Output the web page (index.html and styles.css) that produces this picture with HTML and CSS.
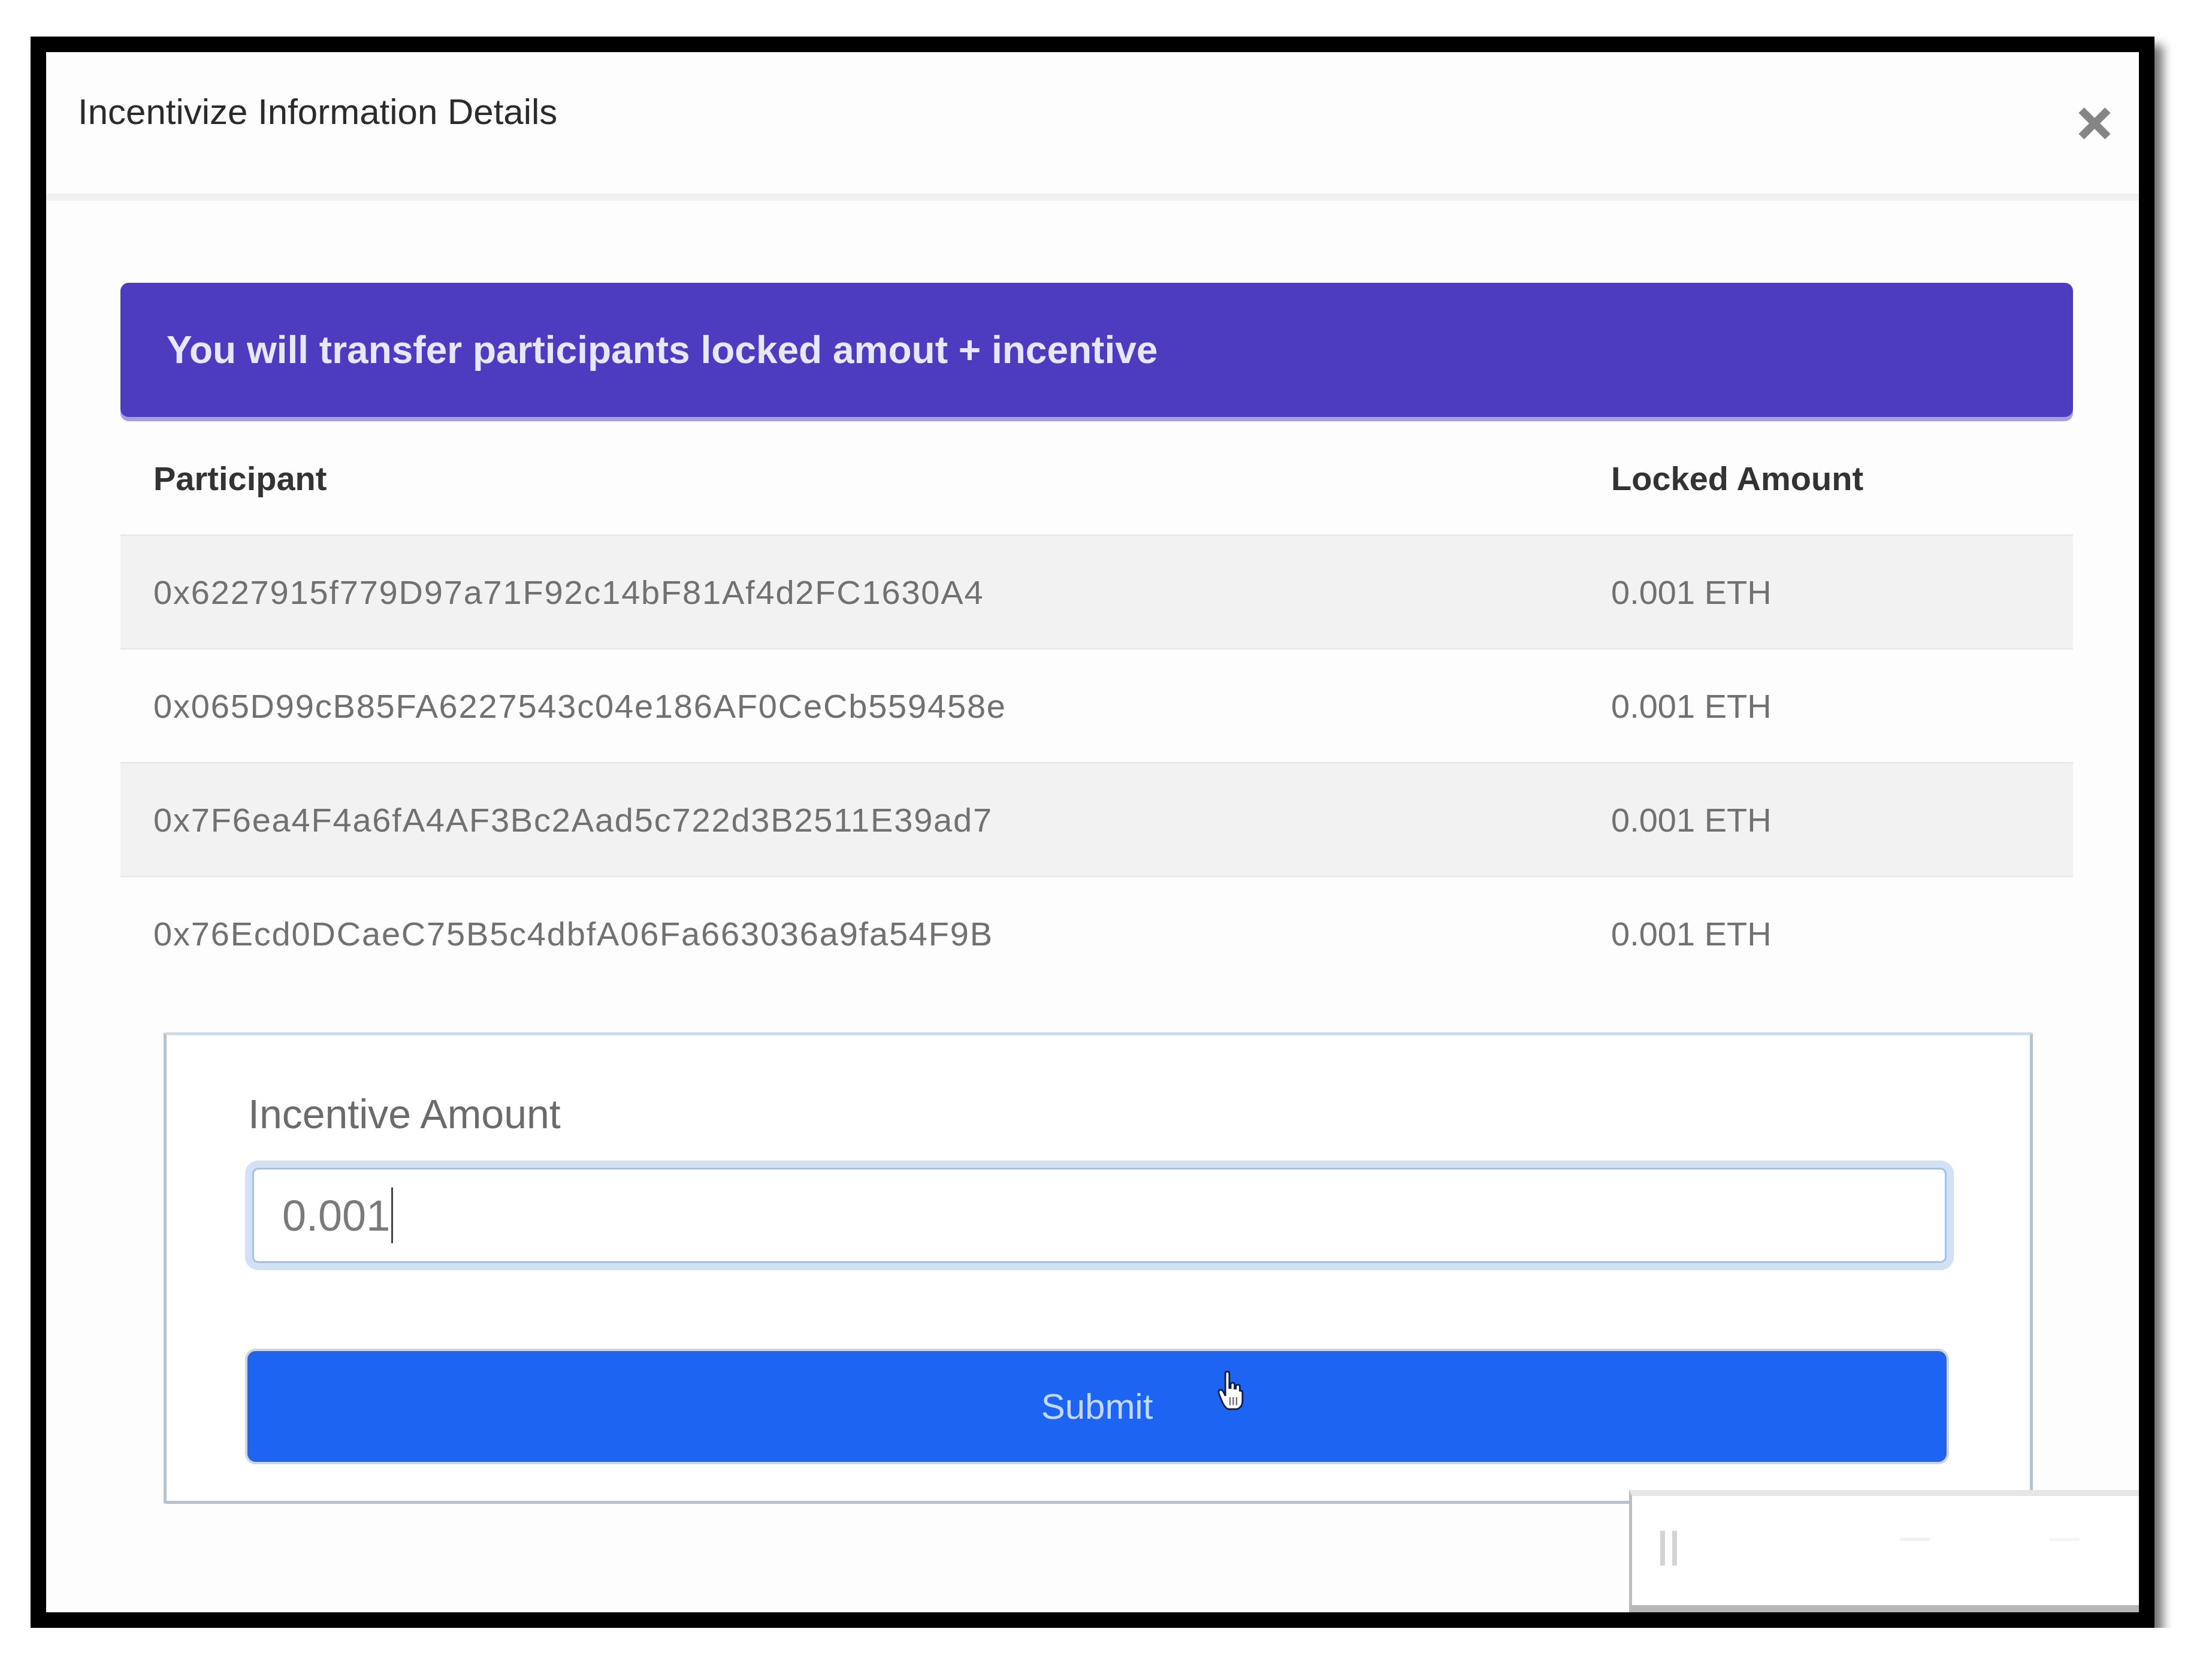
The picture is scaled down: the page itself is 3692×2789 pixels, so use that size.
FILE: index.html
```html
<!DOCTYPE html>
<html lang="en">
<head>
    <meta charset="UTF-8">
    <meta name="viewport" content="width=device-width, initial-scale=1.0">
    <title>Incentivize Information Details</title>
    <link rel="stylesheet" href="styles.css">
</head>
<body>
    <div class="frame">
        <div class="modal">
            <div class="modal-header">
                <h5 class="modal-title">Incentivize Information Details</h5>
                <button class="modal-close" aria-label="Close">
                    <svg viewBox="0 0 58 56"><path d="M7 6 L51 50 M51 6 L7 50"/></svg>
                </button>
            </div>

            <div class="modal-body">
                <div class="alert">You will transfer participants locked amout + incentive</div>

                <table class="participants">
                    <colgroup>
                        <col class="col-address">
                        <col>
                    </colgroup>
                    <thead>
                        <tr><th>Participant</th><th>Locked Amount</th></tr>
                    </thead>
                    <tbody>
                        <tr class="striped"><td class="address">0x6227915f779D97a71F92c14bF81Af4d2FC1630A4</td><td>0.001 ETH</td></tr>
                        <tr><td class="address">0x065D99cB85FA6227543c04e186AF0CeCb559458e</td><td>0.001 ETH</td></tr>
                        <tr class="striped"><td class="address">0x7F6ea4F4a6fA4AF3Bc2Aad5c722d3B2511E39ad7</td><td>0.001 ETH</td></tr>
                        <tr><td class="address">0x76Ecd0DCaeC75B5c4dbfA06Fa663036a9fa54F9B</td><td>0.001 ETH</td></tr>
                    </tbody>
                </table>

                <div class="incentive-card">
                    <label class="field-label">Incentive Amount</label>
                    <div class="amount-input">0.001<span class="caret"></span></div>
                    <button class="submit-btn">
                        Submit
                        <svg class="hand-cursor" viewBox="0 0 40 60">
                            <path d="M12 4 Q12 1 15 1 Q18 1 18 4 L18 26 L20 26 L20 21 Q20 18 23 18 Q26 18 26 21 L26 27 L28 27 L28 24 Q28 21 31 21 Q34 21 34 24 L34 30 L35 30 Q38 30 38 33 L38 46 Q38 55 30 58 L16 58 Q10 55 6 44 L2 34 Q1 30 4 29 Q7 28 9 32 L12 38 Z" fill="#fff" stroke="#0d1b4a" stroke-width="2.5"/>
                            <path d="M19 40 L19 52 M24 40 L24 52 M29 40 L29 52" stroke="#667" stroke-width="2"/>
                        </svg>
                    </button>
                </div>
            </div>

            <div class="player-bar">
                <span class="pause"><i></i><i></i></span>
                <span class="faint-dash"></span>
                <span class="faint-dash short"></span>
            </div>
        </div>
    </div>
</body>
</html>
```

FILE: styles.css
```css
body {
    margin: 0;
    background: #fff;
    font-family: "Liberation Sans", Arial, sans-serif;
}
.frame {
    box-sizing: border-box;
    width: 3545px;
    height: 2656px;
    margin: 61px 0 0 51px;
    border: 26px solid #000;
    box-shadow: 14px 14px 16px rgba(0, 0, 0, 0.55);
}
.modal {
    position: relative;
    height: 100%;
    background: #fdfdfd;
    overflow: hidden;
}
.modal-header {
    display: flex;
    justify-content: space-between;
    align-items: flex-start;
    height: 166px;
    padding: 70px 45px 0 53px;
    border-bottom: 12px solid #f1f1f1;
}
.modal-title {
    margin: 0;
    font-size: 60px;
    line-height: 60px;
    font-weight: 400;
    color: #2b2b2b;
}
.modal-close {
    width: 58px;
    height: 56px;
    margin-top: 21px;
    padding: 0;
    border: none;
    background: none;
}
.modal-close svg {
    width: 58px;
    height: 56px;
    display: block;
}
.modal-close path {
    stroke: #858585;
    stroke-width: 13;
    fill: none;
}
.modal-body {
    padding: 137px 110px 0 124px;
}
.alert {
    display: flex;
    align-items: center;
    height: 224px;
    padding-left: 77px;
    border-radius: 14px;
    background: #4d3cc0;
    box-shadow: 0 7px 0 #a79fe6;
    color: #e8e5ff;
    font-size: 64px;
    font-weight: 700;
}
.participants {
    width: 100%;
    margin-top: 8px;
    border-collapse: collapse;
    table-layout: fixed;
}
.col-address {
    width: 2433px;
}
.participants th {
    height: 188px;
    padding: 0 0 0 55px;
    text-align: left;
    font-size: 56px;
    font-weight: 700;
    color: #333;
}
.participants td {
    height: 188px;
    padding: 0 0 0 55px;
    border-top: 2px solid #e4e4e4;
    font-size: 56px;
    color: #717171;
    white-space: nowrap;
}
.participants td.address {
    letter-spacing: 1.8px;
}
.participants tr.striped td {
    background: #f2f2f2;
}
.incentive-card {
    margin: 71px 67px 0 72px;
    padding: 90px 139px 65px 143px;
    border: 5px solid #b4c3d2;
    border-top-color: #cddcea;
    border-radius: 4px;
    background: #fff;
}
.field-label {
    display: block;
    margin-left: -7px;
    font-size: 68px;
    line-height: 82px;
    color: #6b6b6b;
}
.amount-input {
    display: flex;
    align-items: center;
    box-sizing: border-box;
    height: 159px;
    margin-top: 49px;
    padding-left: 47px;
    border: 3px solid #a6c0e4;
    border-radius: 10px;
    box-shadow: 0 0 0 12px #d2e2f6;
    background: #fff;
    font-size: 72px;
    color: #7a7a7a;
}
.caret {
    width: 3px;
    height: 93px;
    margin-left: 2px;
    background: #444;
}
.submit-btn {
    position: relative;
    display: block;
    box-sizing: border-box;
    width: calc(100% + 8px);
    height: 185px;
    margin: 147px 0 0 -8px;
    border: 3px solid #2f62cf;
    border-radius: 14px;
    background: #1d64f2;
    box-shadow: 0 0 0 4px #c9d6e4;
    color: #c4d8ff;
    font-family: "Liberation Sans", Arial, sans-serif;
    font-size: 60px;
}
.hand-cursor {
    position: absolute;
    left: 1616px;
    top: 30px;
    width: 44px;
    height: 66px;
}
.player-bar {
    position: absolute;
    left: 2642px;
    top: 2400px;
    right: 0;
    bottom: 0;
    display: flex;
    align-items: flex-start;
    padding: 58px 0 0 47px;
    border-top: 10px solid #e6e6e6;
    border-left: 5px solid #bdbdbd;
    border-bottom: 12px solid #b6b6b6;
    background: #fff;
}
.pause {
    display: flex;
    gap: 12px;
}
.pause i {
    width: 8px;
    height: 58px;
    background: #d4d4d4;
}
.faint-dash {
    width: 50px;
    height: 5px;
    margin: 12px 0 0 372px;
    background: #f0f0f0;
}
.faint-dash.short {
    margin-left: 200px;
    background: #f4f4f4;
}
```
